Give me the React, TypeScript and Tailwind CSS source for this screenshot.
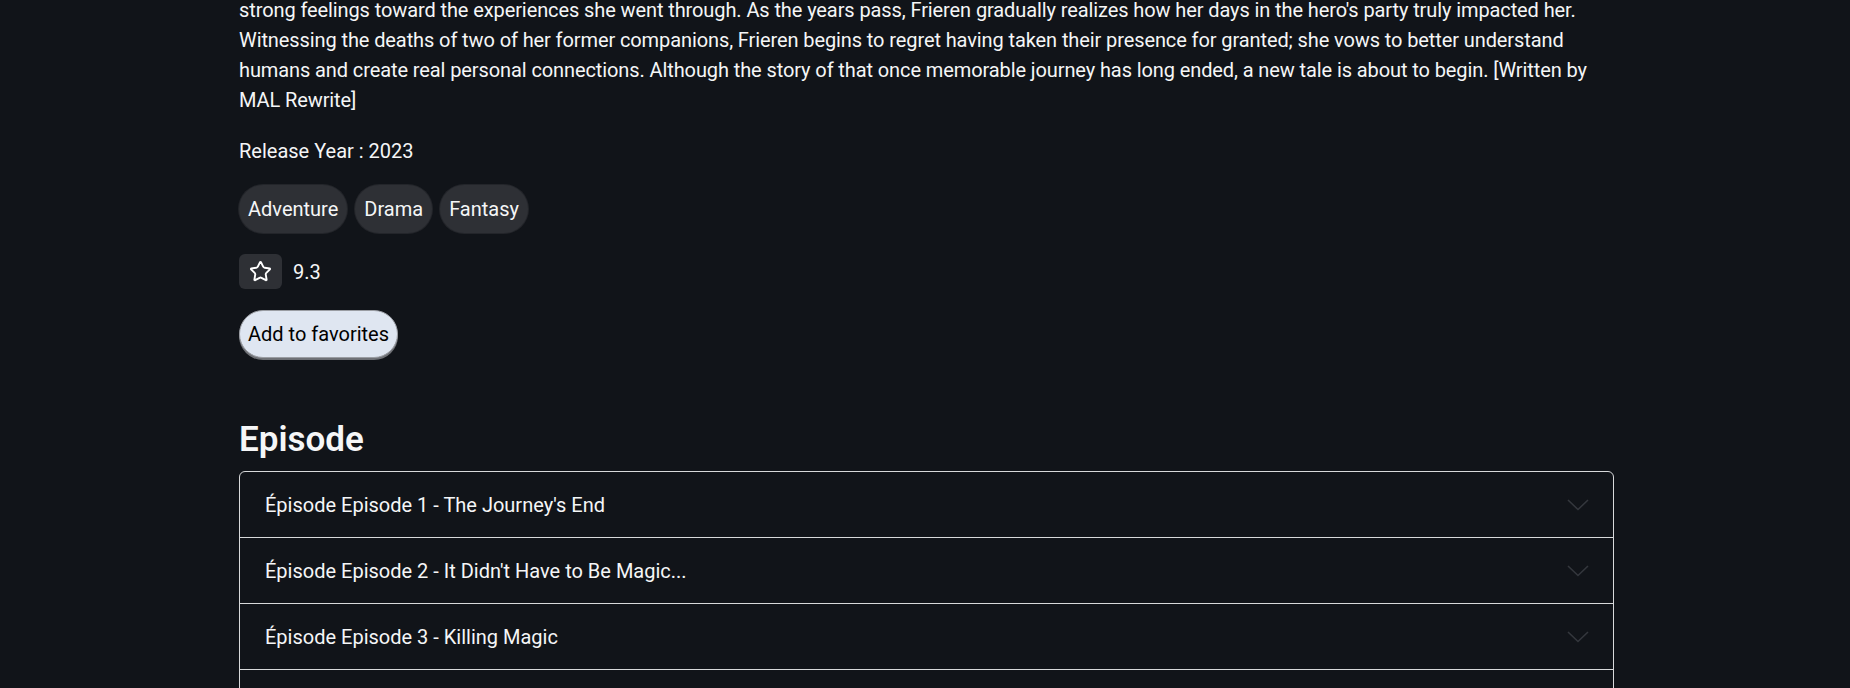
import React from 'react';
import { Star } from 'lucide-react';

const genres = ['Adventure', 'Drama', 'Fantasy'];

const episodes = [
  "Episode 1 - The Journey's End",
  "Episode 2 - It Didn't Have to Be Magic...",
  'Episode 3 - Killing Magic',
  'Episode 4 - The Land Where Souls Rest',
  'Episode 5 - Phantoms of the Dead',
];

// synopsis tail, broken where the page wraps it
const synopsis = [
  "strong feelings toward the experiences she went through. As the years pass, Frieren gradually realizes how her days in the hero's party truly impacted her.",
  'Witnessing the deaths of two of her former companions, Frieren begins to regret having taken their presence for granted; she vows to better understand',
  'humans and create real personal connections. Although the story of that once memorable journey has long ended, a new tale is about to begin. [Written by',
  'MAL Rewrite]',
];

function Chevron() {
  return (
    <svg width="22" height="12" viewBox="0 0 22 12" fill="none" className="shrink-0">
      <polyline points="1,1 11,10.5 21,1" stroke="#34373d" strokeWidth="1.6" />
    </svg>
  );
}

export default function App() {
  return (
    <div className="min-h-screen overflow-hidden bg-[#111419] text-[#f5f6f7] font-['Roboto','Liberation_Sans',sans-serif]">
      <div className="w-[1375px] ml-[239px] flex flex-col items-start">
        <p className="mt-[-5px] text-[20px] leading-[30px] tracking-[-0.1px]">
          {synopsis.map((l) => (
            <span key={l} className="block whitespace-nowrap">
              {l}
            </span>
          ))}
        </p>

        <p className="mt-[22px] text-[20px] leading-[28px]">Release Year : 2023</p>

        <div className="mt-[20px] flex gap-2">
          {genres.map((g) => (
            <span
              key={g}
              className="h-[48px] px-[9px] flex items-center rounded-full bg-[#2e3035] text-[20px] shadow-[0_0_0_1px_#23252a]"
            >
              {g}
            </span>
          ))}
        </div>

        <div className="mt-[21px] flex items-center">
          <button className="w-[43px] h-[35px] flex items-center justify-center rounded-md bg-[#2e3035]">
            <Star size={23} strokeWidth={2} color="#ffffff" />
          </button>
          <span className="ml-[11px] text-[20px]">9.3</span>
        </div>

        <button className="mt-[21px] h-[48px] px-[8px] rounded-full bg-[#dfe6f1] text-black text-[20px] border border-[#9a9da3] shadow-[0_2px_0_#6f7176]">
          Add to favorites
        </button>

        <h2 className="mt-[61px] text-[35px] leading-[42px] font-semibold">Episode</h2>

        <div className="mt-[10px] w-full border border-[#d8d9db] rounded-md">
          {episodes.map((e, i) => (
            <div
              key={e}
              className={
                'h-[66px] pl-[25px] pr-6 flex items-center justify-between text-[20px] ' +
                (i < episodes.length - 1 ? 'border-b border-[#d8d9db]' : '')
              }
            >
              <span>Épisode {e}</span>
              <Chevron />
            </div>
          ))}
        </div>
      </div>
    </div>
  );
}
